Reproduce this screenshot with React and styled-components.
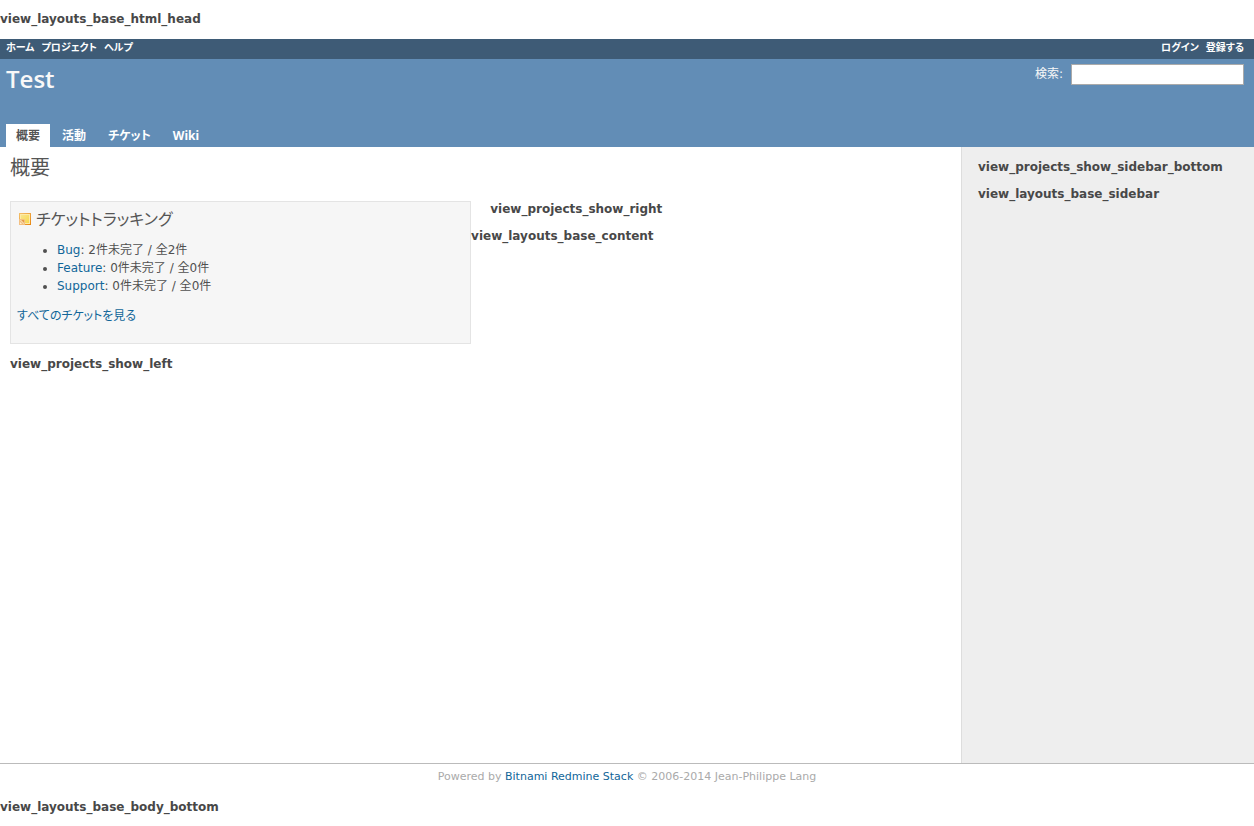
import React from "react";
import styled, { createGlobalStyle } from "styled-components";

const GlobalStyle = createGlobalStyle`
  * { box-sizing: border-box; }
  body {
    margin: 0;
    background: #fff;
    color: #484848;
    font-family: Verdana, "DejaVu Sans", "Noto Sans CJK JP", sans-serif;
    font-size: 12px;
    line-height: 18px;
    font-feature-settings: "palt";
  }
`;

const Page = styled.div`
  display: flex;
  flex-direction: column;
  min-height: 100vh;
`;

const Hook = styled.p`
  margin: 0;
  font-size: 12px;
  font-weight: bold;
  line-height: 17px;
`;

const HeadHook = styled(Hook)`
  padding: 11px 0;
`;

const BottomHook = styled(Hook)`
  padding: 9px 0 10px;
`;

const TopMenu = styled.nav`
  display: flex;
  justify-content: space-between;
  height: 20px;
  padding: 0 10px 0 6px;
  background: #3e5b76;
`;

const MenuGroup = styled.div`
  display: flex;
  gap: 7px;
`;

const MenuLink = styled.a`
  color: #fff;
  font-size: 10px;
  font-weight: bold;
  line-height: 18px;
  text-decoration: none;
`;

const Header = styled.header`
  display: flex;
  flex-direction: column;
  justify-content: space-between;
  height: 88px;
  padding: 5px 10px 0 6px;
  background: #628db6;
  color: #f8f8f8;
`;

const HeaderRow = styled.div`
  display: flex;
  justify-content: space-between;
  align-items: flex-start;
`;

const ProjectTitle = styled.h1`
  margin: 0;
  font-family: "Trebuchet MS", "Open Sans", sans-serif;
  font-size: 24px;
  font-weight: 600;
  line-height: 30px;
`;

const Search = styled.form`
  display: flex;
  gap: 8px;
`;

const SearchLabel = styled.label`
  line-height: 20px;
`;

const SearchInput = styled.input`
  width: 173px;
  height: 21px;
  padding: 2px;
  border: 1px solid #aaa;
  background: #fff;
  font: inherit;
`;

const Tabs = styled.nav`
  display: flex;
  gap: 2px;
`;

const Tab = styled.a`
  height: 23px;
  padding: 0 10px;
  background: ${(p) => (p.$selected ? "#fff" : "transparent")};
  color: ${(p) => (p.$selected ? "#555" : "#fff")};
  font-family: "Noto Sans", "Noto Sans CJK JP", sans-serif;
  font-size: 12px;
  font-weight: bold;
  line-height: 24px;
  text-decoration: none;
`;

const Main = styled.div`
  display: flex;
  flex: 1;
`;

const Content = styled.main`
  flex: 1;
  padding: 6px 10px 10px;
`;

const PageTitle = styled.h2`
  margin: 0 0 20px;
  color: #555;
  font-family: "Noto Sans CJK JP", sans-serif;
  font-size: 20px;
  font-weight: 400;
  line-height: 28px;
`;

const Split = styled.div`
  display: flex;
  align-items: flex-start;
`;

const LeftColumn = styled.div`
  width: 49%;
  display: grid;
  gap: 12px;
`;

const RightColumn = styled.div`
  flex: 1;
  display: grid;
  gap: 10px;
`;

const RightHook = styled(Hook)`
  width: 96%;
  justify-self: end;
`;

const Box = styled.section`
  padding: 6px 6px 18px;
  border: 1px solid #e4e4e4;
  background: #f6f6f6;
  color: #505050;
`;

const BoxTitle = styled.h3`
  display: flex;
  align-items: center;
  gap: 3px;
  margin: 0 0 12px;
  color: #555;
  font-family: "Noto Sans CJK JP", sans-serif;
  font-size: 16px;
  font-weight: 400;
  line-height: 21px;
`;

const TrackerList = styled.ul`
  margin: 0 0 12px;
  padding: 0 0 0 40px;
`;

const Link = styled.a`
  color: #169;
  text-decoration: none;
`;

const Sidebar = styled.aside`
  display: grid;
  align-content: start;
  gap: 10px;
  width: 293px;
  padding: 12px 16px;
  border-left: 1px solid #ddd;
  background: #eee;
`;

const Footer = styled.footer`
  padding: 4px;
  border-top: 1px solid #bbb;
  color: #aaa;
  font-size: 11px;
  line-height: 18px;
  text-align: center;
`;

const TicketIcon = () => (
  <svg width="16" height="16" viewBox="0 0 16 16" aria-hidden="true">
    <defs>
      <linearGradient id="frame" x1="0" y1="0" x2="1" y2="1">
        <stop offset="0" stopColor="#f3c06c" />
        <stop offset="1" stopColor="#e8860f" />
      </linearGradient>
      <linearGradient id="note" x1="0" y1="0" x2="1" y2="1">
        <stop offset="0" stopColor="#f9e48c" />
        <stop offset="1" stopColor="#f7d84e" />
      </linearGradient>
    </defs>
    <rect x="2" y="2" width="12" height="12" fill="url(#frame)" />
    <rect x="3" y="3" width="10" height="10" fill="#fdeaa8" />
    <rect x="4" y="4" width="8" height="8" fill="url(#note)" />
    <path d="M2 8h5l1 1v5H2z" fill="#f3c083" />
    <path d="M3 9h4v4z" fill="#fdeccb" />
    <path d="M4 9h3v3z" fill="#e59a48" />
    <path d="M3 11v2h2z" fill="#fdeccb" />
  </svg>
);

const trackers = [
  { name: "Bug", open: 2, total: 2 },
  { name: "Feature", open: 0, total: 0 },
  { name: "Support", open: 0, total: 0 },
];

const tabs = ["概要", "活動", "チケット", "Wiki"];

export default function App() {
  return (
    <Page lang="ja">
      <GlobalStyle />
      <HeadHook>view_layouts_base_html_head</HeadHook>
      <TopMenu>
        <MenuGroup>
          <MenuLink href="#">ホーム</MenuLink>
          <MenuLink href="#">プロジェクト</MenuLink>
          <MenuLink href="#">ヘルプ</MenuLink>
        </MenuGroup>
        <MenuGroup>
          <MenuLink href="#">ログイン</MenuLink>
          <MenuLink href="#">登録する</MenuLink>
        </MenuGroup>
      </TopMenu>
      <Header>
        <HeaderRow>
          <ProjectTitle>Test</ProjectTitle>
          <Search>
            <SearchLabel htmlFor="q">検索:</SearchLabel>
            <SearchInput id="q" type="text" />
          </Search>
        </HeaderRow>
        <Tabs>
          {tabs.map((t, i) => (
            <Tab key={t} href="#" $selected={i === 0}>{t}</Tab>
          ))}
        </Tabs>
      </Header>
      <Main>
        <Content>
          <PageTitle>概要</PageTitle>
          <Split>
            <LeftColumn>
              <Box>
                <BoxTitle><TicketIcon />チケットトラッキング</BoxTitle>
                <TrackerList>
                  {trackers.map((t) => (
                    <li key={t.name}>
                      <Link href="#">{t.name}</Link>: {t.open}件未完了 / 全{t.total}件
                    </li>
                  ))}
                </TrackerList>
                <Link href="#">すべてのチケットを見る</Link>
              </Box>
              <Hook>view_projects_show_left</Hook>
            </LeftColumn>
            <RightColumn>
              <RightHook>view_projects_show_right</RightHook>
              <Hook>view_layouts_base_content</Hook>
            </RightColumn>
          </Split>
        </Content>
        <Sidebar>
          <Hook>view_projects_show_sidebar_bottom</Hook>
          <Hook>view_layouts_base_sidebar</Hook>
        </Sidebar>
      </Main>
      <Footer>
        Powered by <Link href="#">Bitnami Redmine Stack</Link> © 2006-2014 Jean-Philippe Lang
      </Footer>
      <BottomHook>view_layouts_base_body_bottom</BottomHook>
    </Page>
  );
}
